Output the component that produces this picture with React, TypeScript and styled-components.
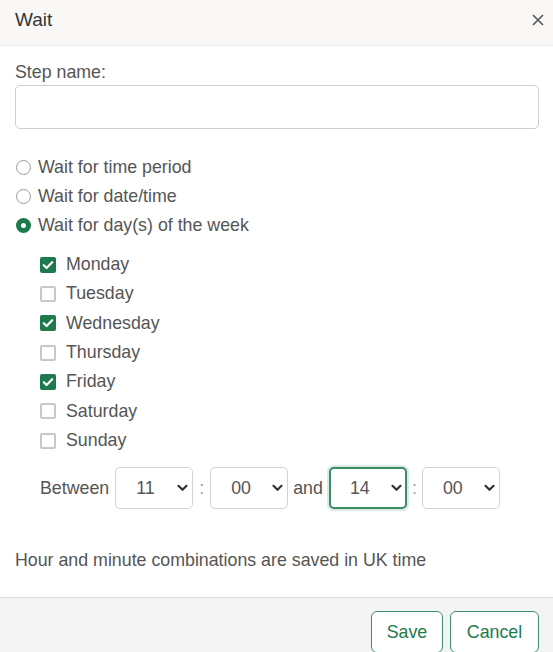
import React from 'react';
import styled, { createGlobalStyle, css } from 'styled-components';

const GlobalStyle = createGlobalStyle`
  html, body {
    margin: 0;
    padding: 0;
    background: #ffffff;
  }
  body {
    font-family: "Liberation Sans", Arial, sans-serif;
    color: #555;
  }
`;

const green = '#1d7a4c';
const textSize = '17.8px';

const Dialog = styled.div`
  width: 553px;
  height: 652px;
  display: flex;
  flex-direction: column;
  overflow: hidden;
  background: #fff;
`;

const Header = styled.div`
  height: 45px;
  display: flex;
  align-items: center;
  justify-content: space-between;
  padding: 0 7px 0 15px;
  background: #f9f8f7;
  border-bottom: 1px solid #ebebeb;
  flex-shrink: 0;
`;

const Title = styled.div`
  font-size: 19px;
  color: #333;
  margin-top: -5px;
`;

const CloseButton = styled.button`
  border: 0;
  background: none;
  padding: 0;
  width: 16px;
  height: 16px;
  display: flex;
  align-items: center;
  justify-content: center;
  margin-top: -5px;
  cursor: pointer;
`;

const Body = styled.div`
  flex: 1;
  padding: 15px 14px 0 15px;
  display: flex;
  flex-direction: column;
`;

const Label = styled.label`
  font-size: ${textSize};
  line-height: 22px;
  margin-bottom: 2px;
`;

const TextInput = styled.input`
  box-sizing: border-box;
  height: 44px;
  width: 100%;
  border: 1px solid #cfcfcf;
  border-radius: 5px;
  font: inherit;
  padding: 0 10px;
  outline: none;
`;

const RadioGroup = styled.div`
  margin-top: 24px;
  display: flex;
  flex-direction: column;
`;

const OptionRow = styled.label<{ $height: number }>`
  display: flex;
  align-items: center;
  height: ${p => p.$height}px;
  font-size: ${textSize};
  gap: 7px;
  cursor: pointer;
`;

const RadioMark = styled.span<{ $checked?: boolean }>`
  box-sizing: border-box;
  width: 15px;
  height: 15px;
  border-radius: 50%;
  display: inline-flex;
  align-items: center;
  justify-content: center;
  margin-left: 1px;
  ${p => p.$checked
    ? css`
        background: ${green};
        &::after {
          content: '';
          width: 5px;
          height: 5px;
          border-radius: 50%;
          background: #fff;
        }
      `
    : css`
        border: 1px solid #9a9a9a;
        background: #fff;
      `}
`;

const DayList = styled.div`
  margin-top: 10px;
  padding-left: 25px;
  display: flex;
  flex-direction: column;
`;

const CheckMark = styled.span<{ $checked?: boolean }>`
  box-sizing: border-box;
  width: 16px;
  height: 16px;
  border-radius: 2px;
  display: inline-flex;
  align-items: center;
  justify-content: center;
  margin-right: 3px;
  ${p => p.$checked
    ? css`background: ${green};`
    : css`border: 2px solid #c8c8c8; background: #fff;`}
`;

const TimeRow = styled.div`
  margin-top: 12px;
  padding-left: 25px;
  display: flex;
  align-items: center;
  font-size: ${textSize};
`;

const Sep = styled.span<{ $w: number }>`
  width: ${p => p.$w}px;
  text-align: center;
  color: #999;
`;

const SelectWrap = styled.div`
  position: relative;
  width: 78px;
  height: 42px;
`;

const Select = styled.select<{ $focused?: boolean }>`
  appearance: none;
  box-sizing: border-box;
  width: 100%;
  height: 100%;
  border: 1px solid #d3d3d3;
  border-radius: 5px;
  background: #fff;
  font: inherit;
  font-size: ${textSize};
  color: #555;
  padding: 0 0 0 20px;
  outline: none;
  ${p => p.$focused && css`
    border: 2px solid #3a8d66;
    padding-left: 19px;
    box-shadow: 0 0 0 2px rgba(58, 141, 102, 0.18);
  `}
`;

const Chevron = styled.svg`
  position: absolute;
  right: 5px;
  top: 50%;
  margin-top: -4px;
  pointer-events: none;
`;

const Note = styled.p`
  margin: 40px 0 0;
  font-size: ${textSize};
  line-height: 22px;
`;

const Footer = styled.div`
  box-sizing: border-box;
  flex-shrink: 0;
  height: 55px;
  background: #f4f4f4;
  border-top: 1px solid #dedede;
  display: flex;
  justify-content: flex-end;
  align-items: flex-start;
  gap: 7px;
  padding: 13px 14px 0 0;
`;

const Button = styled.button<{ $w: number }>`
  flex-shrink: 0;
  width: ${p => p.$w}px;
  height: 42px;
  background: #fff;
  border: 1px solid #3c8f68;
  border-radius: 6px;
  color: ${green};
  font: inherit;
  font-size: ${textSize};
  cursor: pointer;
`;

const days = [
  { name: 'Monday', on: true },
  { name: 'Tuesday', on: false },
  { name: 'Wednesday', on: true },
  { name: 'Thursday', on: false },
  { name: 'Friday', on: true },
  { name: 'Saturday', on: false },
  { name: 'Sunday', on: false },
];

const hours = Array.from({ length: 24 }, (_, i) => String(i).padStart(2, '0'));
const minutes = ['00', '15', '30', '45'];

const TimeSelect = ({ value, options, focused }: { value: string; options: string[]; focused?: boolean }) => (
  <SelectWrap>
    <Select defaultValue={value} $focused={focused}>
      {options.map(o => <option key={o} value={o}>{o}</option>)}
    </Select>
    <Chevron width="11" height="8" viewBox="0 0 11 8">
      <path d="M1.5 1.8 L5.5 5.8 L9.5 1.8" fill="none" stroke="#333" strokeWidth="2.2" strokeLinecap="round" strokeLinejoin="round" />
    </Chevron>
  </SelectWrap>
);

const App = () => {
  return (
    <>
      <GlobalStyle />
      <Dialog>
        <Header>
          <Title>Wait</Title>
          <CloseButton aria-label="Close">
            <svg width="12" height="12" viewBox="0 0 12 12">
              <path d="M1 1 L11 11 M11 1 L1 11" stroke="#555" strokeWidth="1.6" />
            </svg>
          </CloseButton>
        </Header>
        <Body>
          <Label>Step name:</Label>
          <TextInput />
          <RadioGroup>
            <OptionRow $height={29}><RadioMark />Wait for time period</OptionRow>
            <OptionRow $height={29}><RadioMark />Wait for date/time</OptionRow>
            <OptionRow $height={29}><RadioMark $checked />Wait for day(s) of the week</OptionRow>
          </RadioGroup>
          <DayList>
            {days.map(d => (
              <OptionRow key={d.name} $height={29.33}>
                <CheckMark $checked={d.on}>
                  {d.on && (
                    <svg width="12" height="10" viewBox="0 0 12 10">
                      <path d="M1.8 5.2 L4.6 8 L10.2 2.2" fill="none" stroke="#fff" strokeWidth="2.2" strokeLinecap="round" strokeLinejoin="round" />
                    </svg>
                  )}
                </CheckMark>
                {d.name}
              </OptionRow>
            ))}
          </DayList>
          <TimeRow>
            <span style={{ marginRight: 6 }}>Between</span>
            <TimeSelect value="11" options={hours} />
            <Sep $w={17}>:</Sep>
            <TimeSelect value="00" options={minutes} />
            <span style={{ margin: '0 6px 0 5px' }}>and</span>
            <TimeSelect value="14" options={hours} focused />
            <Sep $w={15}>:</Sep>
            <TimeSelect value="00" options={minutes} />
          </TimeRow>
          <Note>Hour and minute combinations are saved in UK time</Note>
        </Body>
        <Footer>
          <Button $w={72}>Save</Button>
          <Button $w={89}>Cancel</Button>
        </Footer>
      </Dialog>
    </>
  );
};

export default App;
